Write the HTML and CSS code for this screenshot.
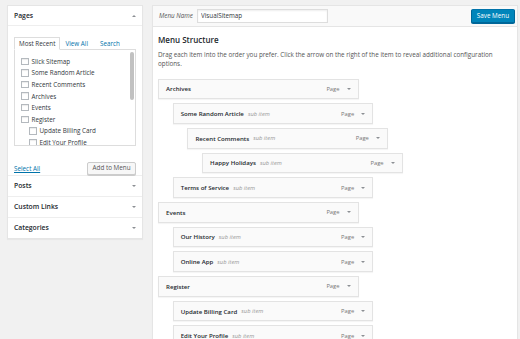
FILE: index.html
```html
<!doctype html>
<html>

<head>
  <meta charset="utf-8">
  <title>Menus</title>
  <meta name="viewport" content="width=device-width, initial-scale=1">
  <link rel="stylesheet" href="styles.css">
</head>

<body>
  <div class="wrap">

    <div class="side">
      <div class="section open">
        <div class="section_title">
          <span>Pages</span>
          <span class="arrow_up"></span>
        </div>
        <div class="section_body">
          <ul class="tabs">
            <li class="active">Most Recent</li>
            <li><a href="#">View All</a></li>
            <li><a href="#">Search</a></li>
          </ul>
          <div class="tab_panel">
            <ul class="checklist">
              <li><span class="check"></span>Slick Sitemap</li>
              <li><span class="check"></span>Some Random Article</li>
              <li><span class="check"></span>Recent Comments</li>
              <li><span class="check"></span>Archives</li>
              <li><span class="check"></span>Events</li>
              <li><span class="check"></span>Register</li>
              <li class="child"><span class="check"></span>Update Billing Card</li>
              <li class="child"><span class="check"></span>Edit Your Profile</li>
            </ul>
            <div class="scrollbar"><div class="thumb"></div></div>
          </div>
          <div class="side_actions">
            <a href="#" class="select_all">Select All</a>
            <a href="#" class="button">Add to Menu</a>
          </div>
        </div>
      </div>
      <div class="section">
        <div class="section_title">
          <span>Posts</span>
          <span class="arrow_down"></span>
        </div>
      </div>
      <div class="section">
        <div class="section_title">
          <span>Custom Links</span>
          <span class="arrow_down"></span>
        </div>
      </div>
      <div class="section">
        <div class="section_title">
          <span>Categories</span>
          <span class="arrow_down"></span>
        </div>
      </div>
    </div>

    <div class="main">
      <div class="main_head">
        <label class="menu_name_label">Menu Name</label>
        <input class="menu_name" type="text" value="VisualSitemap">
        <a href="#" class="button primary">Save Menu</a>
      </div>
      <div class="main_body">
        <h3>Menu Structure</h3>
        <p class="desc">Drag each item into the order you prefer. Click the arrow on the right of the item to reveal additional configuration options.</p>

        <ul class="menu">
          <li class="item"><span class="label">Archives</span><span class="type">Page</span><span class="arrow_down"></span></li>
          <li class="item d1"><span class="label">Some Random Article</span><span class="sub">sub item</span><span class="type">Page</span><span class="arrow_down"></span></li>
          <li class="item d2"><span class="label">Recent Comments</span><span class="sub">sub item</span><span class="type">Page</span><span class="arrow_down"></span></li>
          <li class="item d3"><span class="label">Happy Holidays</span><span class="sub">sub item</span><span class="type">Page</span><span class="arrow_down"></span></li>
          <li class="item d1"><span class="label">Terms of Service</span><span class="sub">sub item</span><span class="type">Page</span><span class="arrow_down"></span></li>
          <li class="item"><span class="label">Events</span><span class="type">Page</span><span class="arrow_down"></span></li>
          <li class="item d1"><span class="label">Our History</span><span class="sub">sub item</span><span class="type">Page</span><span class="arrow_down"></span></li>
          <li class="item d1"><span class="label">Online App</span><span class="sub">sub item</span><span class="type">Page</span><span class="arrow_down"></span></li>
          <li class="item"><span class="label">Register</span><span class="type">Page</span><span class="arrow_down"></span></li>
          <li class="item d1"><span class="label">Update Billing Card</span><span class="sub">sub item</span><span class="type">Page</span><span class="arrow_down"></span></li>
          <li class="item d1"><span class="label">Edit Your Profile</span><span class="sub">sub item</span><span class="type">Page</span><span class="arrow_down"></span></li>
        </ul>
      </div>
    </div>

  </div>
</body>

</html>
```

FILE: styles.css
```css
* {
  margin: 0;
  padding: 0;
  box-sizing: border-box;
}

html,
body {
  height: 100%;
  overflow: hidden;
}

body {
  background: #f1f1f1;
  font-family: "Open Sans", "Noto Sans", sans-serif;
  font-size: 6.3px;
  color: #444;
}

ul {
  list-style: none;
}

a {
  color: #0073aa;
  text-decoration: none;
}

.wrap {
  display: flex;
  align-items: flex-start;
  gap: 9px;
  padding: 5px 2px 0 7px;
}

/* left column */

.side {
  width: 136px;
  flex: none;
  background: #fff;
  border: 1px solid #e5e5e5;
  box-shadow: 0 1px 1px rgba(0, 0, 0, 0.04);
}

.section {
  border-top: 1px solid #eee;
}

.section:first-child {
  border-top: 0;
}

.section_title {
  height: 20px;
  padding: 0 6px 0 6px;
  display: flex;
  align-items: center;
  justify-content: space-between;
  font-size: 6.8px;
  font-weight: 600;
  color: #23282d;
}

.open .section_title {
  border-bottom: 1px solid #eee;
}

.arrow_down,
.arrow_up {
  width: 0;
  height: 0;
  border-left: 2.2px solid transparent;
  border-right: 2.2px solid transparent;
}

.arrow_down {
  border-top: 2.5px solid #8c8f94;
}

.arrow_up {
  border-bottom: 2.5px solid #8c8f94;
}

.section_body {
  padding: 11px 6px 0 6px;
}

.tabs {
  display: flex;
  align-items: flex-end;
  height: 13px;
  position: relative;
  z-index: 1;
}

.tabs li {
  padding: 0 4px;
  line-height: 12px;
}

.tabs li.active {
  border: 1px solid #ddd;
  border-bottom: 1px solid #fff;
  background: #fff;
  color: #32373c;
  height: 13px;
}

.tabs li + li {
  margin-left: 1px;
}

.tabs li:last-child {
  margin-left: 4px;
}

.tab_panel {
  display: flex;
  height: 97px;
  margin-top: -1px;
  border: 1px solid #ddd;
  overflow: hidden;
}

.checklist {
  flex: 1;
  padding: 5.5px 0 0 6px;
  color: #32373c;
}

.checklist li {
  display: flex;
  align-items: center;
  height: 11.6px;
}

.checklist li.child {
  padding-left: 8px;
}

.check {
  width: 7.5px;
  height: 7.5px;
  border: 1px solid #b4b9be;
  background: #fff;
  box-shadow: inset 0 1px 1px rgba(0, 0, 0, 0.08);
  margin-right: 3px;
  flex: none;
}

.scrollbar {
  width: 6px;
  padding: 2px 1px;
  flex: none;
}

.thumb {
  height: 48px;
  border-radius: 2px;
  background: #c1c1c1;
}

.side_actions {
  display: flex;
  align-items: center;
  justify-content: space-between;
  margin-top: 16px;
}

.select_all {
  text-decoration: underline;
}

.button {
  display: inline-block;
  height: 12.5px;
  line-height: 10.5px;
  padding: 0 4.5px;
  border: 1px solid #ccc;
  border-radius: 2px;
  background: #f7f7f7;
  box-shadow: 0 1px 0 #ccc;
  color: #555;
}

/* right column */

.main {
  flex: 1;
  min-height: 400px;
  background: #fff;
  border: 1px solid #e5e5e5;
  box-shadow: 0 1px 1px rgba(0, 0, 0, 0.04);
}

.main_head {
  height: 20.5px;
  display: flex;
  align-items: center;
  padding: 0 2px 0 6px;
  background: #f9f9f9;
  border-bottom: 1px solid #e5e5e5;
}

.menu_name_label {
  font-style: italic;
  color: #555;
  margin-right: 4px;
}

.menu_name {
  width: 131px;
  height: 14px;
  padding: 0 3px;
  border: 1px solid #ddd;
  box-shadow: inset 0 1px 2px rgba(0, 0, 0, 0.07);
  font-family: inherit;
  font-size: 6.3px;
  color: #32373c;
  outline: none;
}

.button.primary {
  margin-left: auto;
  height: 14px;
  line-height: 12px;
  padding: 0 5px;
  background: #0085ba;
  border-color: #0073aa #006799 #006799;
  box-shadow: 0 1px 0 #006799;
  color: #fff;
}

.main_body {
  padding: 8px 5px 0 5px;
}

h3 {
  font-size: 8px;
  line-height: 10px;
  font-weight: 600;
  color: #23282d;
}

.desc {
  margin-top: 5px;
  line-height: 9px;
  color: #555;
}

.menu {
  margin-top: 11px;
}

.item {
  display: flex;
  align-items: center;
  width: 200.5px;
  height: 20.7px;
  margin-bottom: 4px;
  padding: 0 7px 0 7px;
  background: #fafafa;
  border: 1px solid #e3e3e3;
  box-shadow: 0 1px 1px rgba(0, 0, 0, 0.04);
}

.item.d1 {
  margin-left: 14.7px;
}

.item.d2 {
  margin-left: 29.4px;
}

.item.d3 {
  margin-left: 44.1px;
}

.label {
  font-weight: 600;
  color: #23282d;
  font-size: 6.1px;
}

.sub {
  margin-left: 4px;
  font-style: italic;
  color: #999;
  font-size: 5.8px;
}

.type {
  margin-left: auto;
  margin-right: 7px;
  color: #777;
  font-size: 5.8px;
}
```
